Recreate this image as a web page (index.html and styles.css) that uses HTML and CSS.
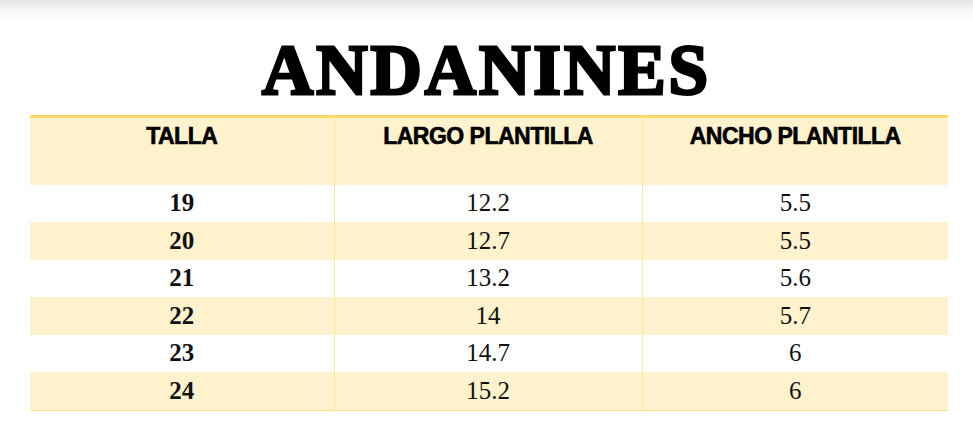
FILE: index.html
```html
<!DOCTYPE html>
<html lang="es">
<head>
<meta charset="utf-8">
<title>Andanines</title>
<link rel="stylesheet" href="styles.css">
</head>
<body>
<div class="shade"></div>
<h1 class="title">ANDANINES</h1>
<table class="sizes">
  <colgroup>
    <col class="c1"><col class="c2"><col class="c3">
  </colgroup>
  <thead>
    <tr><th>TALLA</th><th>LARGO PLANTILLA</th><th>ANCHO PLANTILLA</th></tr>
  </thead>
  <tbody>
    <tr><td class="size">19</td><td>12.2</td><td>5.5</td></tr>
    <tr class="alt"><td class="size">20</td><td>12.7</td><td>5.5</td></tr>
    <tr><td class="size">21</td><td>13.2</td><td>5.6</td></tr>
    <tr class="alt"><td class="size">22</td><td>14</td><td>5.7</td></tr>
    <tr><td class="size">23</td><td>14.7</td><td>6</td></tr>
    <tr class="alt"><td class="size">24</td><td>15.2</td><td>6</td></tr>
  </tbody>
</table>
</body>
</html>
```
FILE: styles.css
```css
html, body {
  margin: 0;
  padding: 0;
  background: #ffffff;
}
body {
  width: 973px;
  height: 441px;
  overflow: hidden;
  font-family: "Liberation Serif", serif;
  color: #111;
}
.shade {
  height: 22px;
  background: linear-gradient(#e4e4e4, #f6f6f6 40%, #ffffff);
}
.title {
  margin: 12px 0 8px 0;
  height: 73px;
  font-family: "Liberation Serif", serif;
  font-weight: 700;
  font-size: 71px;
  line-height: 73px;
  text-align: center;
  color: #000;
  letter-spacing: 3px;
  -webkit-text-stroke: 3px #000;
}
.sizes {
  margin-left: 30px;
  width: 918px;
  border-collapse: collapse;
  table-layout: fixed;
}
.c1 { width: 304px; }
.c2 { width: 308px; }
.c3 { width: 306px; }
.sizes thead tr {
  background: #fff2cc;
  border-top: 3px solid #ffd966;
}
.sizes th {
  height: 68px;
  padding: 5px 0 0 0;
  box-sizing: border-box;
  vertical-align: top;
  font-family: "Liberation Sans", sans-serif;
  font-weight: 700;
  font-size: 23px;
  line-height: 26px;
  letter-spacing: -0.5px;
  color: #000;
  -webkit-text-stroke: 0.6px #000;
}
.sizes th + th,
.sizes td + td {
  border-left: 1px solid #ffe699;
}
.sizes td {
  height: 37.5px;
  padding: 0;
  text-align: center;
  vertical-align: middle;
  font-size: 25px;
  line-height: 26px;
  color: #111;
}
.sizes td.size {
  font-weight: 700;
}
.sizes tr.alt {
  background: #fff2cc;
}
.sizes tbody tr:last-child {
  border-bottom: 1px solid #ffe28a;
}
```
